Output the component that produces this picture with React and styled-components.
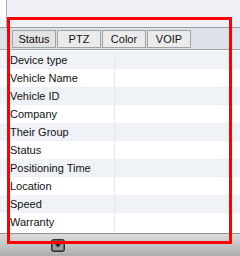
import styled, { createGlobalStyle } from 'styled-components'

const GlobalStyle = createGlobalStyle`
	html, body {
		margin: 0;
		padding: 0;
		background: #ffffff;
	}
	body {
		font-family: 'Liberation Sans', Arial, sans-serif;
		font-size: 11px;
		color: #111;
	}
`

const fields = [
	'Device type',
	'Vehicle Name',
	'Vehicle ID',
	'Company',
	'Their Group',
	'Status',
	'Positioning Time',
	'Location',
	'Speed',
	'Warranty',
]

const tabs = ['Status', 'PTZ', 'Color', 'VOIP']

const DownButton = () => (
	<svg width='14' height='13' viewBox='0 0 14 13'>
		<rect x='0.5' y='0.5' width='13' height='12' rx='2' fill='#5e5e5e' stroke='#303030' />
		<rect x='2' y='2' width='10' height='9' rx='1' fill='#9c9c9c' />
		<path d='M3.5 4.5 L10.5 4.5 L7 8.5 Z' fill='#262626' />
	</svg>
)

const App = () => {
	return (
		<Screen>
			<GlobalStyle />
			<TopArea />
			<TabBar>
				{tabs.map((t) => (
					<Tab key={t} active={t === 'Status'}>
						{t}
					</Tab>
				))}
			</TabBar>
			<Grid>
				{fields.map((f, i) => (
					<Row key={f} odd={i % 2 === 0}>
						<Label>{f}</Label>
						<Value />
					</Row>
				))}
			</Grid>
			<Footer>
				<DownButton />
			</Footer>
			<Highlight />
		</Screen>
	)
}

export default App

const Screen = styled.div`
	position: relative;
	width: 240px;
	height: 256px;
	display: flex;
	flex-direction: column;
	overflow: hidden;
	background: #fff;
`

const TopArea = styled.div`
	height: 27px;
	background: #eff1f6;
	margin-left: 6px;
	border-left: 1px solid #a9acb2;
`

const TabBar = styled.div`
	height: 20px;
	display: flex;
	align-items: flex-end;
	gap: 1px;
	padding: 0 0 1px 12px;
	background: #dde1e8;
	border-top: 1px solid #9a9da3;
	border-bottom: 1px solid #a3a6ab;
`

const Tab = styled.div`
	width: 42px;
	height: 16px;
	display: flex;
	align-items: center;
	justify-content: center;
	background: ${(p) => (p.active ? '#e2e2e2' : '#ebebeb')};
	border: 1px solid #a2a2a2;
	color: #111;
	font-size: 11px;
`

const Grid = styled.div`
	display: flex;
	flex-direction: column;
	padding-top: 1px;
	flex: 1;
`

const Row = styled.div`
	height: 18px;
	display: grid;
	grid-template-columns: 115px 1fr;
	background: ${(p) => (p.odd ? '#eff2f7' : '#ffffff')};
`

const Label = styled.div`
	padding-left: 10px;
	display: flex;
	align-items: center;
	border-right: 1px solid #e6e9ee;
	white-space: nowrap;
`

const Value = styled.div``

const Footer = styled.div`
	height: 22px;
	display: flex;
	align-items: center;
	padding-left: 51px;
	border-top: 1px solid #8c8f94;
	background: linear-gradient(#dcdcdc, #adadad);
`

const Highlight = styled.div`
	position: absolute;
	left: 7px;
	top: 17px;
	width: 219px;
	height: 221px;
	border: 3px solid #ff0000;
	pointer-events: none;
`
